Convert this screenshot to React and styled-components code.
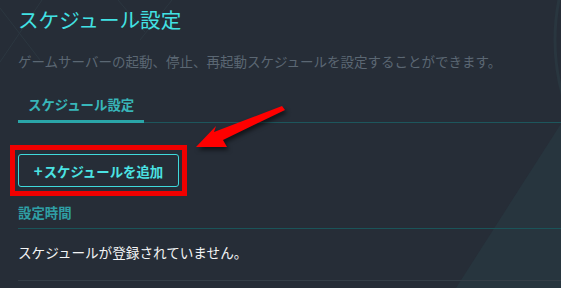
import React from 'react';
import styled, { createGlobalStyle } from 'styled-components';

const GlobalStyle = createGlobalStyle`
  html, body {
    margin: 0;
    padding: 0;
    background: #262d37;
  }
  body {
    font-family: "Noto Sans CJK JP", "Noto Sans", sans-serif;
  }
`;

const Page = styled.div`
  position: relative;
  width: 561px;
  height: 288px;
  overflow: hidden;
  background: #262d37;
`;

const Backdrop = styled.svg`
  position: absolute;
  inset: 0;
  pointer-events: none;
`;

const Content = styled.div`
  position: relative;
  padding: 5px 0 0 18px;
`;

const Title = styled.h1`
  margin: 0;
  font-size: 20.6px;
  line-height: 28px;
  font-weight: 400;
  color: #42e2e4;
`;

const Lead = styled.p`
  margin: 18px 0 0;
  font-size: 13.5px;
  line-height: 20px;
  color: #5b6773;
`;

const TabBar = styled.div`
  display: flex;
  margin-top: 23px;
  border-bottom: 1px solid #1d565c;
`;

const Tab = styled.div`
  padding: 0 10px 6px;
  margin-bottom: -1px;
  font-size: 13.4px;
  line-height: 20px;
  font-weight: 700;
  color: ${({ active }) => (active ? '#38b6b9' : '#5b6773')};
  border-bottom: 3px solid ${({ active }) => (active ? '#2aa5a8' : 'transparent')};
`;

const Toolbar = styled.div`
  display: flex;
  margin-top: 31px;
`;

const Highlight = styled.div`
  position: relative;

  &::after {
    content: '';
    position: absolute;
    inset: -9px -8px -9px -8px;
    border: 5px solid #f00000;
    pointer-events: none;
  }
`;

const AddButton = styled.button`
  display: flex;
  align-items: center;
  justify-content: center;
  box-sizing: border-box;
  width: 161px;
  height: 33px;
  padding: 0;
  background: transparent;
  border: 1px solid #3fd9dc;
  border-radius: 3px;
  font-family: inherit;
  font-size: 13.4px;
  font-weight: 700;
  color: #4be3e3;
  cursor: pointer;
`;

const Plus = styled.span`
  margin-right: 1px;
  font-size: 15px;
`;

const Table = styled.div`
  margin-top: 15px;
`;

const HeadCell = styled.div`
  padding-bottom: 6px;
  font-size: 13.4px;
  line-height: 20px;
  font-weight: 700;
  color: #2f9fa5;
  border-bottom: 1px solid #1a5459;
`;

const EmptyRow = styled.div`
  padding: 13px 0 18px;
  font-size: 13.6px;
  line-height: 20px;
  color: #f2f4f5;
  border-bottom: 1px solid #343e47;
`;

const Arrow = styled.svg`
  position: absolute;
  left: 0;
  top: 0;
  pointer-events: none;
  filter: drop-shadow(2px 3px 2px rgba(0, 0, 0, 0.55));
`;

const App = () => {
  return (
    <Page>
      <GlobalStyle />
      <Backdrop width="561" height="288" viewBox="0 0 561 288">
        <polygon points="640,0 456,288 561,288 561,0" fill="#27353e" />
        <circle cx="760" cy="40" r="205" fill="none" stroke="#29363f" strokeWidth="3" />
        <g stroke="#2c3740" strokeWidth="1" fill="none">
          <line x1="0" y1="8" x2="40" y2="60" />
          <line x1="0" y1="62" x2="42" y2="0" />
          <line x1="118" y1="0" x2="145" y2="32" />
          <line x1="140" y1="40" x2="172" y2="0" />
        </g>
      </Backdrop>
      <Content>
        <Title>スケジュール設定</Title>
        <Lead>ゲームサーバーの起動、停止、再起動スケジュールを設定することができます。</Lead>
        <TabBar>
          <Tab active>スケジュール設定</Tab>
        </TabBar>
        <Toolbar>
          <Highlight>
            <AddButton>
              <Plus>+</Plus>スケジュールを追加
            </AddButton>
          </Highlight>
        </Toolbar>
        <Table>
          <HeadCell>設定時間</HeadCell>
          <EmptyRow>スケジュールが登録されていません。</EmptyRow>
        </Table>
      </Content>
      <Arrow width="561" height="288" viewBox="0 0 561 288">
        <path d="M196 147 L216 126 L214 132 L282 106 L285 110 L223 140 L227 147 Z" fill="#ff0000" />
      </Arrow>
    </Page>
  );
};

export default App;
